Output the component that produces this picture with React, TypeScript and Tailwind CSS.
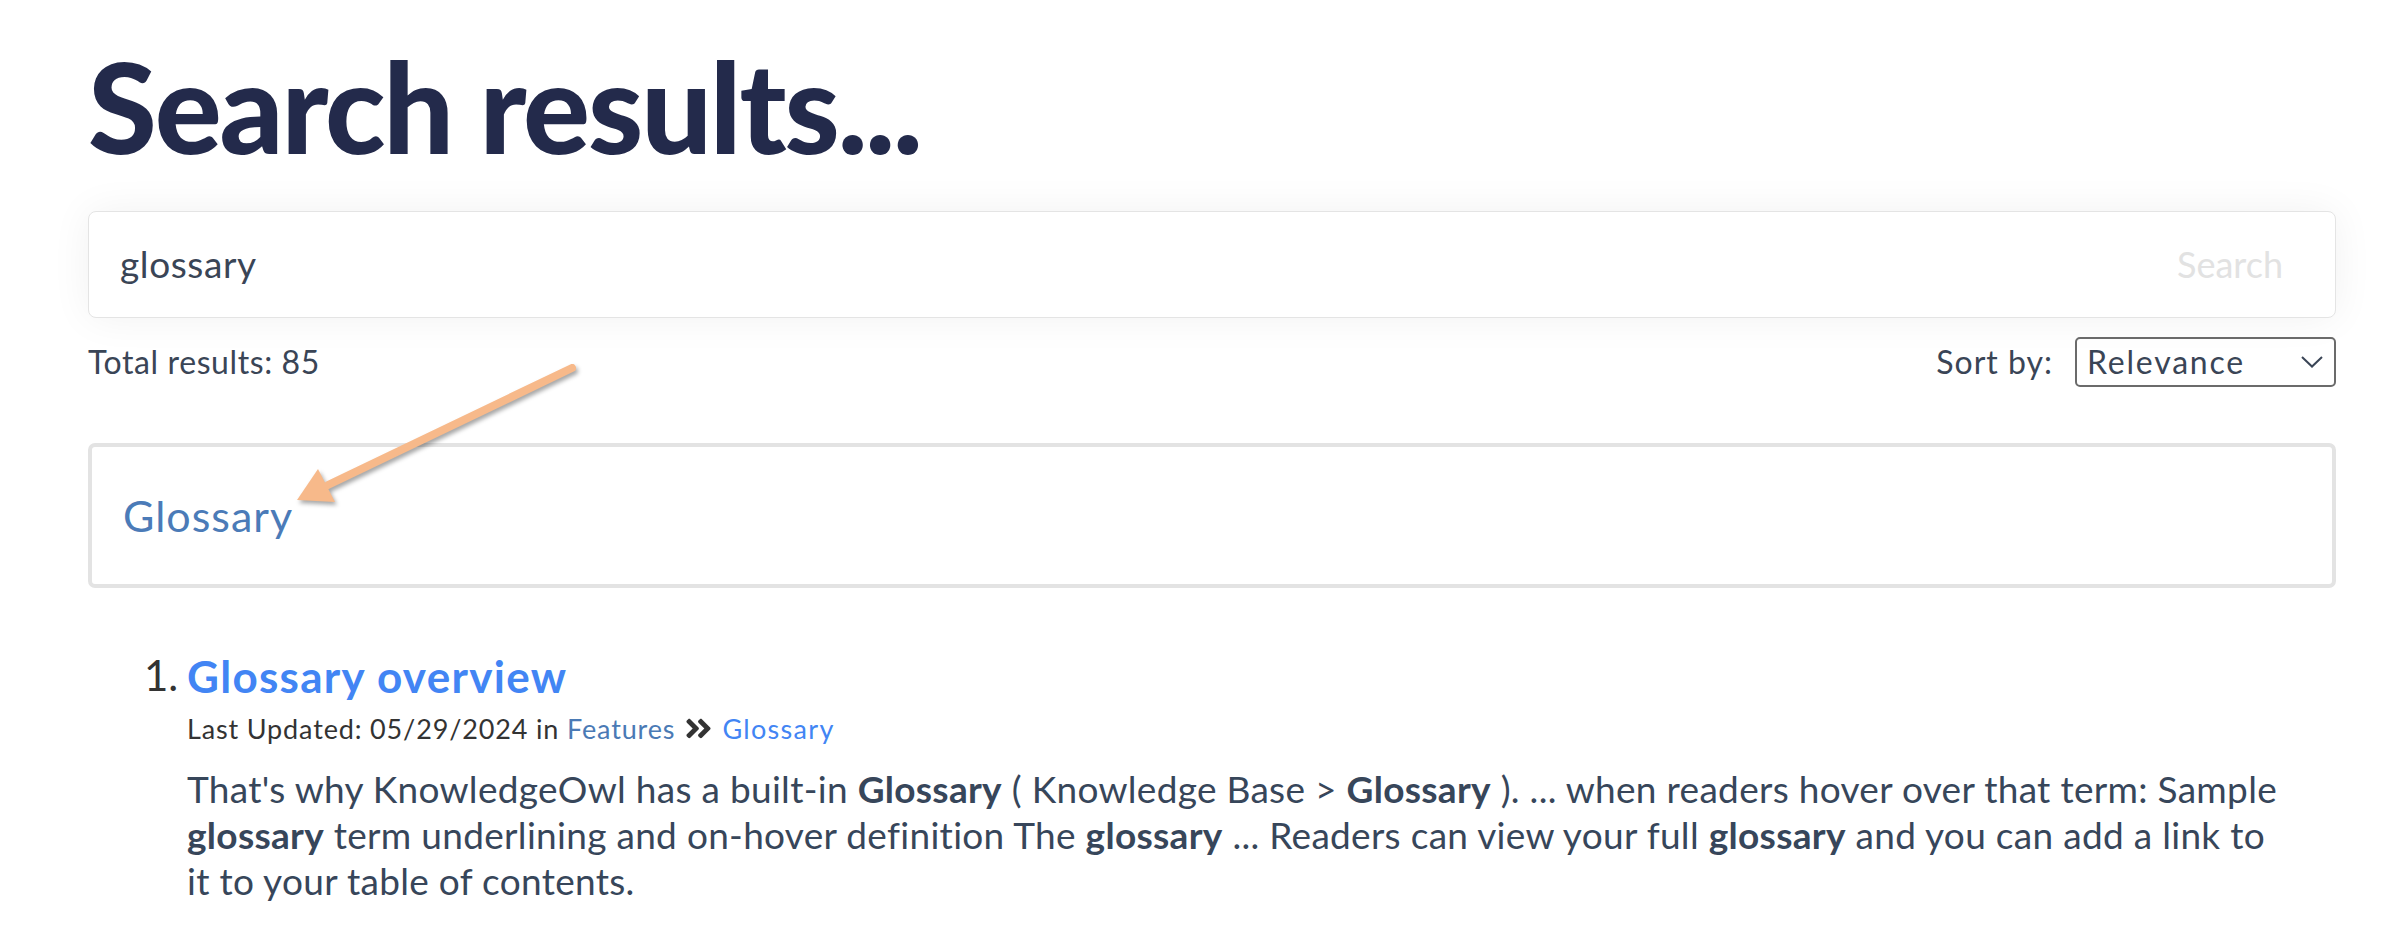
import React from "react";
import { FaAngleDoubleRight } from "react-icons/fa";

const font = { fontFamily: "Lato, 'Noto Sans', sans-serif" };

export default function App() {
  return (
    <div className="relative min-h-[932px] w-[2387px] bg-white overflow-hidden" style={font}>
      <div className="ml-[88px] w-[2248px]">
        <h1 className="pt-[31px] text-[125px] leading-[1.2] font-black text-[#232a4b] tracking-[-0.017em]">
          Search results...
        </h1>

        <div className="mt-[30px] h-[107px] rounded-[8px] border border-[#e4e4e4] bg-white shadow-[0_0_40px_rgba(0,0,0,0.06)] flex items-center justify-between pl-[31px] pr-[52px]">
          <span className="text-[37px] leading-[1.2] tracking-[0.6px] text-[#3a4556]">glossary</span>
          <span className="text-[36px] leading-[1.2] text-[#e2e2e2]">Search</span>
        </div>

        <div className="mt-[19px] flex items-center justify-between h-[50px]">
          <span className="text-[32px] leading-[1.2] tracking-[0.6px] text-[#3a4556]">Total results: 85</span>
          <div className="flex items-center">
            <span className="text-[32px] leading-[1.2] tracking-[1px] text-[#3a4556] mr-[22px]">Sort by:</span>
            <div className="w-[261px] h-[50px] rounded-[5px] border-2 border-[#6b6b6b] flex items-center justify-between pl-[10px] pr-[11px]">
              <span className="text-[32px] leading-[1.2] tracking-[1.8px] text-[#3a4556]">Relevance</span>
              <svg width="22" height="12" viewBox="0 0 22 12" fill="none">
                <polyline points="1,1 11,10.5 21,1" stroke="#3a4556" strokeWidth="2" />
              </svg>
            </div>
          </div>
        </div>

        <div className="mt-[56px] h-[145px] rounded-[7px] border-4 border-[#e3e3e3] flex items-center pl-[31px]">
          <span className="text-[43px] leading-[1.2] tracking-[1px] text-[#4b7bb8]">Glossary</span>
        </div>

        <ol className="mt-[62px] pl-[99px] pr-[40px]">
          <li className="relative">
            <span className="absolute left-[-43px] top-0 text-[42px] leading-[1.2] text-[#333]">1.</span>
            <div className="text-[44px] leading-[1.2] font-bold tracking-[1.3px] text-[#4285f4]">Glossary overview</div>
            <div className="mt-[10px] text-[27px] leading-[1.2] tracking-[0.85px] text-[#333] flex items-center">
              <span>Last Updated: 05/29/2024 in&nbsp;</span>
              <span className="text-[#4a7ab5]">Features</span>
              <FaAngleDoubleRight className="mx-[8px] text-[#333] text-[31px]" />
              <span className="text-[#4285f4] tracking-[1.3px]">Glossary</span>
            </div>
            <p className="mt-[21px] text-[37px] leading-[46px] tracking-[0.3px] text-[#37465a]">
              That's why KnowledgeOwl has a built-in <b>Glossary</b> ( Knowledge Base &gt; <b>Glossary</b> ). ... when readers hover over that term: Sample<br />
              <b>glossary</b> term underlining and on-hover definition The <b>glossary</b> ... Readers can view your full <b>glossary</b> and you can add a link to<br />
              it to your table of contents.
            </p>
          </li>
        </ol>
      </div>

      <svg className="absolute left-0 top-0 pointer-events-none" width="2387" height="932" viewBox="0 0 2387 932" style={{ filter: "drop-shadow(2px 3px 2px rgba(0,0,0,0.35))" }}>
        <line x1="572" y1="368" x2="328" y2="485" stroke="#f7b98a" strokeWidth="8" strokeLinecap="round" />
        <polygon points="297,500 318,469 335,502" fill="#f7b98a" />
      </svg>
    </div>
  );
}
